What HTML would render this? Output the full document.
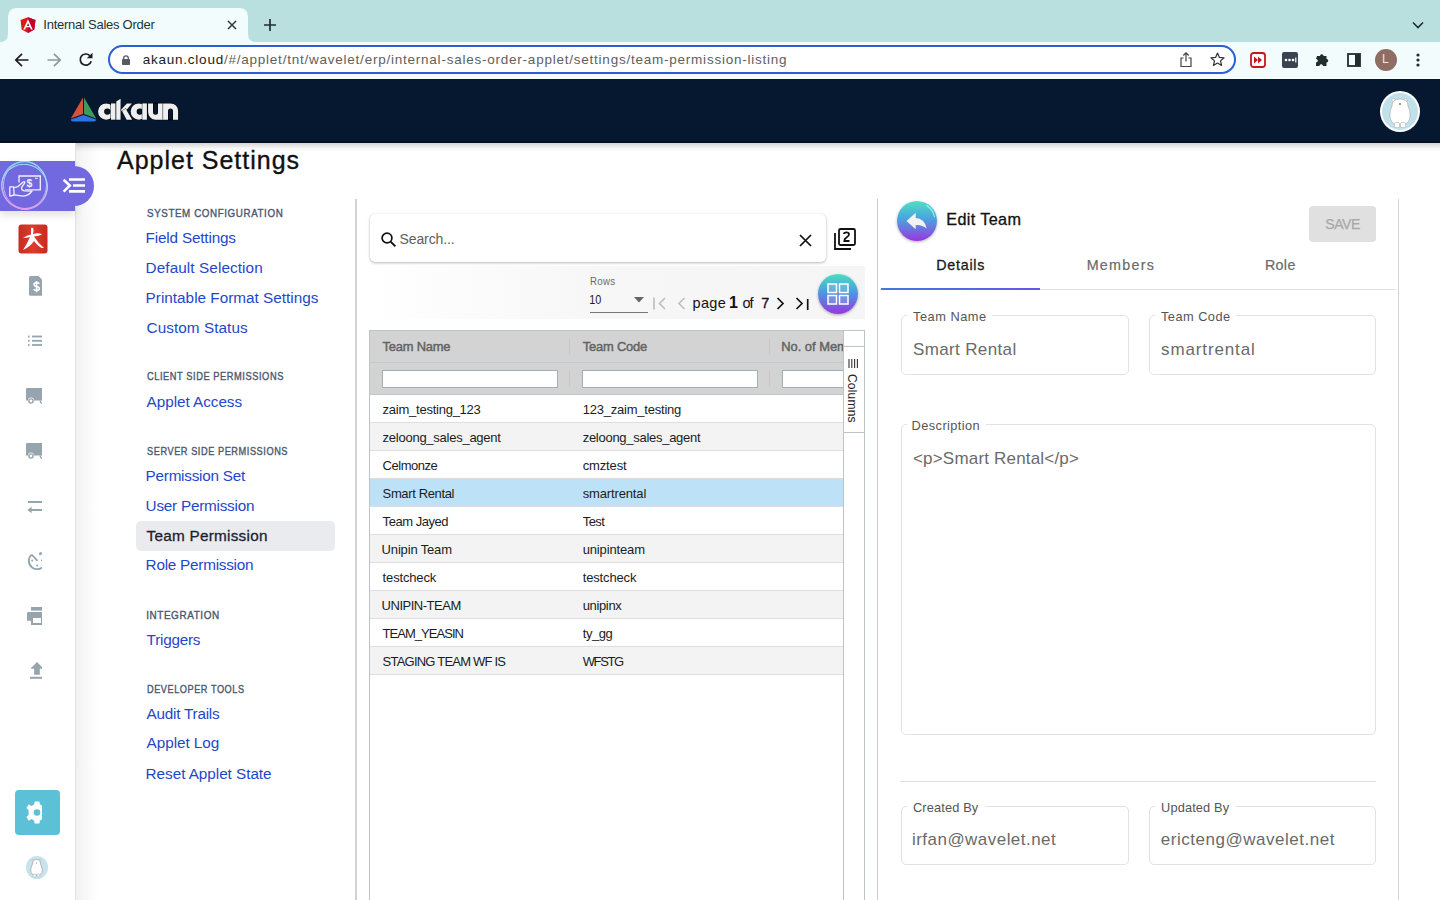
<!DOCTYPE html>
<html><head><meta charset="utf-8">
<title>Internal Sales Order</title>
<style>
*{box-sizing:border-box;margin:0;padding:0}
html,body{width:1440px;height:900px;overflow:hidden;background:#fff;font-family:"Liberation Sans",sans-serif}
body{position:relative}
.a{position:absolute}
.t{position:absolute;white-space:nowrap;line-height:1}
svg{position:absolute;overflow:visible}
.vl{position:absolute;width:1px;background:#cfcfcf}
.row{position:absolute;left:370px;width:473px;height:28px;border-bottom:1px solid #dedede}
.fld{position:absolute;border:1px solid #e2e2e2;border-radius:5px}
.gap{position:absolute;height:4px;background:#fff}
.sep{position:absolute;width:1px;height:16px;background:#c6c9cc}
.finp{position:absolute;height:18px;background:#fff;border:1px solid #9fb1b4;top:370px}
</style></head><body>
<!-- ============ CHROME ============ -->
<div class="a" style="left:0;top:0;width:1440px;height:42px;background:#badfdf"></div>
<svg style="left:0;top:0" width="260" height="42"><path d="M0,42 Q8,42 8,34 L8,17 Q8,8 17,8 L239,8 Q248,8 248,17 L248,34 Q248,42 256,42 Z" fill="#f2fcfc"/></svg>
<!-- angular icon -->
<svg style="left:20px;top:17px" width="16" height="16" viewBox="0 0 16 16"><path d="M8,0.3 L15.5,3 L14.3,12.6 L8,16 L1.7,12.6 L0.5,3 Z" fill="#dd1b16"/><path d="M8,0.3 L15.5,3 L14.3,12.6 L8,16 Z" fill="#c3002f"/><path d="M8,2.2 L3.3,12.5 H5.1 L6,10.3 H10 L10.9,12.5 H12.7 Z M8,6.1 L9.3,9 H6.7 Z" fill="#fff" fill-rule="evenodd"/></svg>
<svg style="left:227px;top:20px" width="10" height="10"><path d="M1,1 L9,9 M9,1 L1,9" stroke="#2a3a3a" stroke-width="1.5"/></svg>
<svg style="left:264px;top:19px" width="12" height="12"><path d="M6,0 V12 M0,6 H12" stroke="#1f2f2f" stroke-width="1.7"/></svg>
<svg style="left:1412px;top:21px" width="12" height="8"><path d="M1,1.5 L6,6.5 L11,1.5" stroke="#1f2f2f" stroke-width="1.6" fill="none"/></svg>
<div class="a" style="left:0;top:42px;width:1440px;height:37px;background:#f2fcfc"></div>
<!-- nav buttons -->
<svg style="left:14px;top:52px" width="16" height="16"><path d="M14.5,8 H2 M8,1.8 L1.8,8 L8,14.2" stroke="#1c1c1c" stroke-width="1.7" fill="none"/></svg>
<svg style="left:46px;top:52px" width="16" height="16"><path d="M1.5,8 H14 M8,1.8 L14.2,8 L8,14.2" stroke="#8a9898" stroke-width="1.7" fill="none"/></svg>
<svg style="left:78px;top:52px" width="16" height="16"><path d="M13.2,9.3 A5.6,5.6 0 1 1 11.8,3.6" stroke="#1c1c1c" stroke-width="1.7" fill="none"/><path d="M8.8,6.3 L14.5,6.3 L14.5,0.8 Z" fill="#1c1c1c"/></svg>
<div class="a" style="left:108px;top:45px;width:1128px;height:29px;border:2px solid #2a5fd5;border-radius:15px;background:#fff"></div>
<svg style="left:122px;top:55px" width="8" height="10"><path d="M1.7,4.3 V3.2 A2.3,2.3 0 0 1 6.3,3.2 V4.3" stroke="#575b61" stroke-width="1.3" fill="none"/><rect x="0" y="4" width="8" height="6" rx="0.8" fill="#575b61"/></svg>
<!-- share -->
<svg style="left:1180px;top:52px" width="12" height="16"><path d="M3.5,6 H1 V14.5 H11 V6 H8.5" stroke="#444" stroke-width="1.2" fill="none"/><path d="M6,1 V9.5 M3.3,3.5 L6,0.9 L8.7,3.5" stroke="#444" stroke-width="1.2" fill="none"/></svg>
<!-- star -->
<svg style="left:1210px;top:52px" width="15" height="15" viewBox="0 0 15 15"><path d="M7.5,1 L9.4,5.4 L14.1,5.8 L10.5,8.9 L11.6,13.5 L7.5,11.1 L3.4,13.5 L4.5,8.9 L0.9,5.8 L5.6,5.4 Z" stroke="#333" stroke-width="1.2" fill="none" stroke-linejoin="round"/></svg>
<!-- ext red -->
<svg style="left:1250px;top:52px" width="16" height="16"><rect x="1" y="1" width="14" height="14" rx="2.5" fill="#fff" stroke="#c8161d" stroke-width="1.8"/><path d="M4,4.5 L8,8 L4,11.5 Z M8,4.5 L12,8 L8,11.5 Z" fill="#c8161d"/></svg>
<!-- ext dark -->
<svg style="left:1282px;top:52px" width="16" height="16"><rect x="0" y="0" width="16" height="16" rx="2" fill="#3a4450"/><circle cx="4" cy="8" r="1.3" fill="#fff"/><circle cx="7.5" cy="8" r="1.3" fill="#fff"/><circle cx="11" cy="8" r="1.3" fill="#fff"/><rect x="13.2" y="5.5" width="1.2" height="5" fill="#fff"/></svg>
<!-- puzzle -->
<svg style="left:1315px;top:53px" width="15" height="14" viewBox="0 0 15 14"><path d="M2,3 H5 A1.8,1.8 0 0 1 8.6,3 H11.5 V6 A1.8,1.8 0 0 1 11.5,9.6 V13 H8 A1.8,1.8 0 0 0 4.4,13 H1 V9.5 A1.8,1.8 0 0 0 1,5.9 Z" fill="#1f2d2d"/></svg>
<!-- sidebar -->
<svg style="left:1347px;top:53px" width="14" height="14"><rect x="1" y="1" width="12" height="12" fill="none" stroke="#1f2d2d" stroke-width="1.8"/><rect x="8" y="1" width="5" height="12" fill="#1f2d2d"/></svg>
<!-- avatar L -->
<div class="a" style="left:1375px;top:49px;width:22px;height:22px;border-radius:50%;background:#8e6d62"></div>
<div class="t" style="left:1382px;top:53px;font-size:12px;color:#f0e6e0">L</div>
<svg style="left:1416px;top:53px" width="4" height="14"><circle cx="2" cy="2" r="1.6" fill="#1f2d2d"/><circle cx="2" cy="7" r="1.6" fill="#1f2d2d"/><circle cx="2" cy="12" r="1.6" fill="#1f2d2d"/></svg>

<!-- ============ APP HEADER ============ -->
<div class="a" style="left:0;top:79px;width:1440px;height:64px;background:#061830;border-bottom:2px solid #030f22"></div>
<svg style="left:70px;top:97px" width="27" height="25" viewBox="0 0 27 25"><path d="M13,0.5 L13,17 L0.8,21.5 Z" fill="#d8513a"/><path d="M14,0.5 L26.2,21.5 L14,17 Z" fill="#3c9a5c"/><path d="M13.5,18 L26.2,22.5 Q26,24.5 24,24.5 L3,24.5 Q1,24.5 0.8,22.5 Z" fill="#2e73e0"/></svg>
<svg style="left:0;top:0" width="200" height="140" viewBox="0 0 200 140"><g fill="#efefef" stroke="#000" stroke-width="0.9" paint-order="stroke">
<path fill-rule="evenodd" d="M106.2,103.4 A8.15,8.15 0 1 0 106.2,119.7 A8.15,8.15 0 1 0 106.2,103.4 Z M107.3,108.4 A3.15,3.15 0 1 1 107.3,114.7 A3.15,3.15 0 1 1 107.3,108.4 Z"/>
<rect x="111" y="103.4" width="4.6" height="16.3"/>
<path d="M116.25,101.6 L120.6,98.8 V119.7 H116.25 Z"/>
<path d="M120.6,110.2 L126.8,103.4 H132 L124.3,112.4 Z"/>
<path d="M122.2,111.2 L125.6,108.6 L132.2,119.7 H126.6 Z"/>
<path fill-rule="evenodd" d="M138.8,103.4 A8.15,8.15 0 1 0 138.8,119.7 A8.15,8.15 0 1 0 138.8,103.4 Z M139.8,108.4 A3.15,3.15 0 1 1 139.8,114.7 A3.15,3.15 0 1 1 139.8,108.4 Z"/>
<rect x="142.3" y="103.4" width="4.6" height="16.3"/>
<path fill-rule="evenodd" d="M148.1,103.4 H163.1 V119.7 H155.6 A7.5,7.5 0 0 1 148.1,112.2 Z M153,103.4 V112.2 A2.5,2.5 0 0 0 158,112.2 V103.4 Z"/>
<path fill-rule="evenodd" d="M163.1,119.7 V103.4 H170.6 A7.5,7.5 0 0 1 178.1,110.9 V119.7 Z M168,119.7 V110.9 A2.5,2.5 0 0 1 173,110.9 V119.7 Z"/>
</g></svg>
<div class="a" style="left:1380px;top:91px;width:40px;height:41px;border-radius:50%;background:#fff"></div>
<div class="a" style="left:1382px;top:93px;width:36px;height:37px;border-radius:50%;background:#c2e0ea"></div>
<svg style="left:1388px;top:96px" width="24" height="34" viewBox="0 0 24 34"><circle cx="5.5" cy="4" r="1.6" fill="#fff" stroke="#999" stroke-width="0.4"/><circle cx="17.5" cy="4" r="1.6" fill="#fff" stroke="#999" stroke-width="0.4"/><path d="M4,10 Q4,3 12,3 Q20,3 20,10 Q22.5,15 22,20 Q21.5,27.5 16,28 H8 Q2.5,27.5 2,20 Q1.5,15 4,10 Z" fill="#fff" stroke="#888" stroke-width="0.4"/><rect x="6.5" y="26.5" width="5" height="5" rx="1" fill="#fff" stroke="#999" stroke-width="0.4"/><rect x="12.5" y="26.5" width="5" height="5" rx="1" fill="#fff" stroke="#999" stroke-width="0.4"/><circle cx="12" cy="8" r="0.8" fill="#222"/></svg>

<!-- ============ LEFT RAIL ============ -->
<div class="a" style="left:0;top:143px;width:76px;height:757px;background:#fff;border-right:1px solid #e2e2e2"></div>
<div class="a" style="left:76px;top:143px;width:22px;height:757px;background:linear-gradient(90deg,#f0f0f0,#f7f7f7 35%,#fff)"></div>
<div class="a" style="left:76px;top:143px;width:1364px;height:9px;background:linear-gradient(180deg,rgba(0,0,0,0.17),rgba(0,0,0,0.04) 60%,rgba(0,0,0,0))"></div>
<!-- purple pill -->
<div class="a" style="left:0;top:161px;width:75px;height:50px;background:#7268e0;box-shadow:0 4px 8px rgba(0,0,0,0.12)"></div>
<div class="a" style="left:53px;top:166px;width:41px;height:40px;border-radius:20px;background:#7268e0"></div>
<svg style="left:0;top:158px" width="100" height="57" viewBox="0 0 100 57"><defs><linearGradient id="ring" x1="0" y1="0" x2="0" y2="1"><stop offset="0" stop-color="#8fe4f8"/><stop offset="0.5" stop-color="#b9c8f5"/><stop offset="1" stop-color="#e79cf2"/></linearGradient></defs>
<ellipse cx="24.5" cy="27.5" rx="22.5" ry="24" transform="rotate(-12 24.5 27.5)" stroke="url(#ring)" stroke-width="1" fill="none"/>
<ellipse cx="24.5" cy="28.5" rx="23" ry="22" transform="rotate(18 24.5 28.5)" stroke="url(#ring)" stroke-width="1" fill="none"/>
<ellipse cx="25" cy="27" rx="21.5" ry="23.5" stroke="url(#ring)" stroke-width="0.9" fill="none"/>
<path d="M19,24.5 V18 H40.3 V31.8 H25" stroke="#f4f0ff" stroke-width="1.3" fill="none"/>
<path d="M35,20.3 H37.8" stroke="#f4f0ff" stroke-width="1"/>
<text x="26.6" y="29" font-size="10.5" font-weight="bold" font-family="Liberation Sans" fill="#f4f0ff">$</text>
<path d="M9.8,28.8 L13.6,28.8 L14.2,37 L9.8,38.2 Z" stroke="#f4f0ff" stroke-width="1.3" fill="none" stroke-linejoin="round"/>
<path d="M14.2,29.6 L18,28.6 L23.2,24 Q25.2,23 24.6,25.2 L21.8,29.2 Q20.8,32.3 24.5,32.8 L32,33.2 Q29,37.6 23,38.2 L14.4,36.8" stroke="#f4f0ff" stroke-width="1.3" fill="none" stroke-linejoin="round"/>
<path d="M63.6,21.8 L69.8,27.6 L63.6,33.6" stroke="#fff" stroke-width="2.6" fill="none"/>
<path d="M69,21.5 H85 M73,27.5 H85 M69,33.3 H85" stroke="#fff" stroke-width="2.7"/>
</svg>
<!-- red app icon -->
<svg style="left:18px;top:224px" width="30" height="30" viewBox="0 0 30 30"><defs><linearGradient id="rg" x1="0" y1="0" x2="1" y2="0"><stop offset="0" stop-color="#c62d22"/><stop offset="0.5" stop-color="#e03a2c"/><stop offset="1" stop-color="#c62a20"/></linearGradient></defs><rect x="0.5" y="0.5" width="29" height="29" rx="3" fill="url(#rg)"/><path d="M13,4 Q16,3 15.5,7 L15,10 Q21,8.5 24,10.5 Q21,12 16,12.5 Q20,19 26,24 Q22,25 16,17 Q12,23 5,26 Q9,20 12,13 Q8,14 5,14 Q9,11 13,10.5 Z" fill="#fff"/></svg>
<!-- gray icons -->
<div class="a" style="left:0;top:0;width:42px;height:900px;overflow:hidden">
<svg style="left:29px;top:276px" width="16" height="20" viewBox="0 0 16 20"><path d="M1.5,0 H9.5 L13,3.5 V19.8 H1.5 Q0,19.8 0,18.3 V1.5 Q0,0 1.5,0 Z" fill="#96a4ae"/><path d="M10.2,7.8 Q10,6.6 7.6,6.6 Q5.1,6.6 5.1,8.6 Q5.1,10.3 7.6,10.5 Q10.3,10.8 10.3,12.6 Q10.3,14.5 7.6,14.5 Q5.2,14.5 5,13.2 M7.6,5 V16.2" stroke="#fff" stroke-width="1.6" fill="none"/></svg>
<svg style="left:28px;top:335px" width="16" height="12" viewBox="0 0 16 12"><rect x="0" y="0.6" width="1.6" height="1.8" fill="#96a4ae"/><rect x="0" y="4.9" width="1.6" height="1.8" fill="#96a4ae"/><rect x="0" y="9.1" width="1.6" height="1.8" fill="#96a4ae"/><rect x="4" y="0.6" width="12" height="1.8" fill="#96a4ae"/><rect x="4" y="4.9" width="12" height="1.8" fill="#96a4ae"/><rect x="4" y="9.1" width="12" height="1.8" fill="#96a4ae"/></svg>
<svg style="left:26px;top:388px" width="20" height="16" viewBox="0 0 20 16"><path d="M1,0 H20 V12.5 H8 A3,3 0 0 0 2,12.5 H0 V1 Q0,0 1,0 Z" fill="#96a4ae"/><circle cx="5" cy="13" r="2.1" fill="none" stroke="#96a4ae" stroke-width="1.4"/><path d="M14.5,12.5 A2.2,2.2 0 0 0 16,15.3" stroke="#96a4ae" stroke-width="1.4" fill="none"/></svg>
<svg style="left:26px;top:443px" width="20" height="16" viewBox="0 0 20 16"><path d="M1,0 H20 V12.5 H8 A3,3 0 0 0 2,12.5 H0 V1 Q0,0 1,0 Z" fill="#96a4ae"/><circle cx="5" cy="13" r="2.1" fill="none" stroke="#96a4ae" stroke-width="1.4"/><path d="M14.5,12.5 A2.2,2.2 0 0 0 16,15.3" stroke="#96a4ae" stroke-width="1.4" fill="none"/></svg>
<svg style="left:27px;top:500px" width="18" height="15" viewBox="0 0 18 15"><path d="M1,2 H18 M3,10 H18" stroke="#96a4ae" stroke-width="1.9"/><path d="M4.6,6.8 L0.4,10 L4.6,13.3 Z" fill="#96a4ae"/></svg>
<svg style="left:27px;top:551px" width="20" height="20" viewBox="0 0 20 20"><path d="M4.5,3.6 A8.4,8.4 0 1 0 13,1.8" stroke="#96a4ae" stroke-width="1.9" fill="none"/><path d="M13,1.6 V4.2" stroke="#96a4ae" stroke-width="1.6"/><path d="M4.6,3.5 L10.5,9.8" stroke="#96a4ae" stroke-width="1.8"/><rect x="4.3" y="8.6" width="1.8" height="1.8" fill="#96a4ae"/><rect x="9.3" y="13.6" width="1.8" height="1.8" fill="#96a4ae"/><rect x="14" y="8.6" width="1.8" height="1.8" fill="#96a4ae"/></svg>
<svg style="left:27px;top:607px" width="20" height="19" viewBox="0 0 20 19"><rect x="4" y="0" width="16" height="3.6" fill="#96a4ae"/><path d="M1.2,5 H16 V18 H4 V13.8 H0 V6.2 Q0,5 1.2,5 Z" fill="#96a4ae"/><rect x="6" y="11" width="8" height="5" fill="#fff"/></svg>
<svg style="left:30px;top:662px" width="16" height="17" viewBox="0 0 16 17"><path d="M7,0 L13.6,6.7 H9.8 V12.8 H4.2 V6.7 H0.4 Z" fill="#96a4ae"/><rect x="0" y="14.8" width="16" height="2" fill="#96a4ae"/></svg>
</div>
<!-- gear box -->
<div class="a" style="left:15px;top:790px;width:45px;height:45px;border-radius:4px;background:#5cc0d7"></div>
<div class="a" style="left:15px;top:790px;width:27px;height:45px;overflow:hidden">
<svg style="left:11px;top:11px" width="22" height="23" viewBox="0 0 22 23"><g transform="translate(11 11.5)"><path d="M-2.4,-11 H2.4 L2.9,-8 L5.6,-6.6 L8.2,-8.2 L10.6,-4.4 L8.4,-2.4 V2.4 L10.6,4.4 L8.2,8.2 L5.6,6.6 L2.9,8 L2.4,11 H-2.4 L-2.9,8 L-5.6,6.6 L-8.2,8.2 L-10.6,4.4 L-8.4,2.4 V-2.4 L-10.6,-4.4 L-8.2,-8.2 L-5.6,-6.6 L-2.9,-8 Z" fill="#fff"/><circle r="3.3" fill="#5cc0d7"/></g></svg>
</div>
<div class="a" style="left:26px;top:856px;width:22px;height:23px;border-radius:50%;background:#c7e3ec"></div>
<svg style="left:30px;top:858px" width="13" height="20" viewBox="0 0 13 20"><circle cx="3" cy="2.2" r="1" fill="#fff" stroke="#888" stroke-width="0.35"/><circle cx="10" cy="2.2" r="1" fill="#fff" stroke="#888" stroke-width="0.35"/><path d="M2.5,6 Q2.5,1.5 6.5,1.5 Q10.5,1.5 10.5,6 Q12.3,9 12.2,12.5 Q12,16.8 8.5,17 H4.5 Q1,16.8 0.8,12.5 Q0.7,9 2.5,6 Z" fill="#fff" stroke="#777" stroke-width="0.45"/><rect x="3.2" y="16" width="2.8" height="3" rx="0.6" fill="#fff" stroke="#888" stroke-width="0.35"/><rect x="7" y="16" width="2.8" height="3" rx="0.6" fill="#fff" stroke="#888" stroke-width="0.35"/><circle cx="6.5" cy="5" r="0.45" fill="#333"/></svg>

<!-- ============ MAIN ============ -->
<div class="a" style="left:136px;top:521px;width:199px;height:30px;border-radius:5px;background:#eaebef"></div>
<div class="a" style="left:355px;top:199px;width:2px;height:701px;background:#d2d2d2"></div>
<div class="a" style="left:877px;top:199px;width:1px;height:701px;background:#cbcbcb"></div>
<div class="a" style="left:1398px;top:199px;width:1px;height:701px;background:#d5d5d5"></div>
<!-- search -->
<div class="a" style="left:370px;top:214px;width:456px;height:48px;border-radius:5px;background:#fff;box-shadow:0 1px 3px rgba(0,0,0,0.28),0 0 1px rgba(0,0,0,0.1)"></div>
<svg style="left:381px;top:232px" width="16" height="16" viewBox="0 0 16 16"><circle cx="6" cy="6" r="4.9" stroke="#111" stroke-width="1.7" fill="none"/><path d="M9.6,9.6 L14.4,14.4" stroke="#111" stroke-width="1.9"/></svg>
<svg style="left:799px;top:234px" width="13" height="13" viewBox="0 0 13 13"><path d="M1,1 L12,12 M12,1 L1,12" stroke="#111" stroke-width="1.7"/></svg>
<svg style="left:833px;top:227px" width="24" height="24" viewBox="0 0 24 24"><path d="M2,6 V22 H18" stroke="#111" stroke-width="1.8" fill="none"/><rect x="6" y="2" width="16" height="16" rx="1.5" stroke="#111" stroke-width="1.8" fill="none"/><path d="M11,7 Q11,5.3 13.5,5.3 Q16,5.3 16,7.3 Q16,9 13.5,10.5 Q11.3,11.8 11.3,14 H16.5" stroke="#111" stroke-width="1.8" fill="none"/></svg>
<!-- paginator bg -->
<div class="a" style="left:370px;top:266px;width:495px;height:53px;background:linear-gradient(90deg,#fff 0%,#f7f7f7 45%,#f5f5f5 100%)"></div>
<div class="a" style="left:590px;top:312px;width:58px;height:1px;background:#777"></div>
<svg style="left:634px;top:297px" width="10" height="6"><path d="M0,0 H10 L5,5.5 Z" fill="#666"/></svg>
<svg style="left:653px;top:297px" width="14" height="13" viewBox="0 0 14 13"><path d="M1,0.5 V12.5" stroke="#bdbdbd" stroke-width="1.6"/><path d="M12,1 L6.5,6.5 L12,12" stroke="#bdbdbd" stroke-width="1.6" fill="none"/></svg>
<svg style="left:677px;top:297px" width="9" height="13" viewBox="0 0 9 13"><path d="M7.5,1 L2,6.5 L7.5,12" stroke="#bdbdbd" stroke-width="1.6" fill="none"/></svg>
<svg style="left:776px;top:297px" width="9" height="13" viewBox="0 0 9 13"><path d="M1.5,1 L7,6.5 L1.5,12" stroke="#111" stroke-width="1.7" fill="none"/></svg>
<svg style="left:795px;top:297px" width="15" height="13" viewBox="0 0 15 13"><path d="M1.5,1 L7,6.5 L1.5,12" stroke="#111" stroke-width="1.7" fill="none"/><path d="M12.7,2 V13" stroke="#111" stroke-width="1.7"/></svg>
<!-- grid fab -->
<div class="a" style="left:818px;top:274px;width:40px;height:40px;border-radius:50%;background:linear-gradient(180deg,#49e0c0 0%,#4a9be0 45%,#7a5ce0 80%,#9a35e0 100%);box-shadow:0 1px 3px rgba(0,0,0,0.3)"></div>
<svg style="left:827px;top:283px" width="22" height="22" viewBox="0 0 22 22"><rect x="1" y="1" width="8.5" height="8.5" stroke="#fff" stroke-width="1.5" fill="rgba(255,255,255,0.15)"/><rect x="12.5" y="1" width="8.5" height="8.5" stroke="#fff" stroke-width="1.5" fill="rgba(255,255,255,0.15)"/><rect x="1" y="12.5" width="8.5" height="8.5" stroke="#fff" stroke-width="1.5" fill="rgba(255,255,255,0.15)"/><rect x="12.5" y="12.5" width="8.5" height="8.5" stroke="#fff" stroke-width="1.5" fill="rgba(255,255,255,0.15)"/></svg>
<!-- table -->
<div class="a" style="left:369px;top:330px;width:496px;height:570px;border:1px solid #bdc3c7;border-bottom:none;background:#fff"></div>
<div class="a" style="left:370px;top:331px;width:473px;height:64px;background:#d3d3d3;border-bottom:1px solid #bdc3c7"></div>
<div class="a" style="left:370px;top:362px;width:473px;height:1px;background:#c3c9cc"></div>
<div class="sep" style="left:569px;top:339px"></div><div class="sep" style="left:769px;top:339px"></div>
<div class="sep" style="left:569px;top:371px"></div><div class="sep" style="left:769px;top:371px"></div>
<div class="finp" style="left:382px;width:176px"></div>
<div class="finp" style="left:582px;width:176px"></div>
<div class="finp" style="left:782px;width:70px"></div>
<div class="row" style="top:395px;background:#fff"></div>
<div class="row" style="top:423px;background:#f3f3f3"></div>
<div class="row" style="top:451px;background:#fff"></div>
<div class="row" style="top:479px;background:#bde2f8"></div>
<div class="row" style="top:507px;background:#fff"></div>
<div class="row" style="top:535px;background:#f3f3f3"></div>
<div class="row" style="top:563px;background:#fff"></div>
<div class="row" style="top:591px;background:#f3f3f3"></div>
<div class="row" style="top:619px;background:#fff"></div>
<div class="row" style="top:647px;background:#f3f3f3"></div>
<!-- side columns panel -->
<div class="a" style="left:843px;top:331px;width:21px;height:569px;background:#fff;border-left:1px solid #bdc3c7;z-index:5"></div>
<div class="a" style="left:843px;top:346px;width:21px;height:1px;background:#bdc3c7;z-index:6"></div>
<div class="a" style="left:843px;top:432px;width:21px;height:1px;background:#bdc3c7;z-index:6"></div>
<svg style="left:848px;top:359px;z-index:6" width="11" height="9" viewBox="0 0 11 9"><path d="M1,0 V9 M3.8,0 V9 M6.6,0 V9 M9.4,0 V9" stroke="#333" stroke-width="1.1"/></svg>
<div class="t" style="left:846px;top:374px;font-size:12px;color:#222;writing-mode:vertical-rl;letter-spacing:0.2px;z-index:6">Columns</div>
<div class="a" style="left:865px;top:331px;width:11px;height:40px;background:#fff;z-index:5"></div>
<!-- right panel -->
<div class="a" style="left:897px;top:201px;width:40px;height:40px;border-radius:50%;background:linear-gradient(180deg,#4fe0c2 0%,#4aa2e0 45%,#7a62e0 78%,#9a35e0 100%);box-shadow:0 1px 3px rgba(0,0,0,0.3)"></div>
<svg style="left:906px;top:210px" width="22" height="22" viewBox="0 0 22 22"><path d="M0.5,11 L9.7,2.7 V8 Q18.5,8.5 20.7,18.5 Q16,14.5 9.7,15 V19.2 Z" fill="#f2f2f2"/><path d="M20.3,-4.7 A18.5,18.5 0 0 1 28.6,7.2" stroke="rgba(170,250,250,0.85)" stroke-width="1.1" fill="none"/></svg>
<div class="a" style="left:1309px;top:206px;width:67px;height:36px;border-radius:4px;background:#e0e0e0"></div>
<div class="a" style="left:880px;top:289px;width:516px;height:1px;background:#e2e2e2"></div>
<div class="a" style="left:881px;top:288px;width:159px;height:2px;background:linear-gradient(90deg,#3b7be0,#6a55e6)"></div>
<div class="fld" style="left:901px;top:315px;width:228px;height:60px"></div>
<div class="gap" style="left:907px;top:313px;width:85px"></div>
<div class="fld" style="left:1149px;top:315px;width:227px;height:60px"></div>
<div class="gap" style="left:1155px;top:313px;width:81px"></div>
<div class="fld" style="left:901px;top:424px;width:475px;height:311px"></div>
<div class="gap" style="left:907px;top:422px;width:79px"></div>
<div class="a" style="left:900px;top:781px;width:476px;height:1px;background:#e2e2e2"></div>
<div class="fld" style="left:901px;top:806px;width:228px;height:59px"></div>
<div class="gap" style="left:907px;top:804px;width:78px"></div>
<div class="fld" style="left:1149px;top:806px;width:227px;height:59px"></div>
<div class="gap" style="left:1155px;top:804px;width:81px"></div>
<div class="t" style="left:43.30px;top:18.20px;font-size:13px;letter-spacing:-0.253px;color:#1d3434;">Internal Sales Order</div>
<div class="t" style="left:142.70px;top:53.17px;font-size:13.5px;letter-spacing:0.767px;color:#5f6060;"><span style="color:#1b1b1b">akaun.cloud</span>/#/applet/tnt/wavelet/erp/internal-sales-order-applet/settings/team-permission-listing</div>
<div class="t" style="left:117.00px;top:148.14px;font-size:25px;letter-spacing:0.995px;color:#111;-webkit-text-stroke:0.35px #111;">Applet Settings</div>
<div class="t" style="left:146.60px;top:206.88px;font-size:11.6px;letter-spacing:0.7px;transform:scaleX(0.8451);transform-origin:0.00px 0;color:#4a5870;-webkit-text-stroke:0.4px #4a5870;">SYSTEM CONFIGURATION</div>
<div class="t" style="left:146.60px;top:370.48px;font-size:11.6px;letter-spacing:0.7px;transform:scaleX(0.7998);transform-origin:0.00px 0;color:#4a5870;-webkit-text-stroke:0.4px #4a5870;">CLIENT SIDE PERMISSIONS</div>
<div class="t" style="left:146.60px;top:444.68px;font-size:11.6px;letter-spacing:0.7px;transform:scaleX(0.7942);transform-origin:0.00px 0;color:#4a5870;-webkit-text-stroke:0.4px #4a5870;">SERVER SIDE PERMISSIONS</div>
<div class="t" style="left:145.60px;top:608.98px;font-size:11.6px;letter-spacing:0.7px;transform:scaleX(0.8548);transform-origin:1.00px 0;color:#4a5870;-webkit-text-stroke:0.4px #4a5870;">INTEGRATION</div>
<div class="t" style="left:146.60px;top:683.08px;font-size:11.6px;letter-spacing:0.7px;transform:scaleX(0.7902);transform-origin:0.00px 0;color:#4a5870;-webkit-text-stroke:0.4px #4a5870;">DEVELOPER TOOLS</div>
<div class="t" style="left:145.60px;top:229.65px;font-size:15.3px;letter-spacing:-0.179px;color:#1f47c9;">Field Settings</div>
<div class="t" style="left:145.60px;top:260.05px;font-size:15.3px;letter-spacing:0.091px;color:#1f47c9;">Default Selection</div>
<div class="t" style="left:145.60px;top:290.05px;font-size:15.3px;letter-spacing:0.011px;color:#1f47c9;">Printable Format Settings</div>
<div class="t" style="left:146.60px;top:319.55px;font-size:15.3px;letter-spacing:0.061px;color:#1f47c9;">Custom Status</div>
<div class="t" style="left:146.60px;top:393.75px;font-size:15.3px;letter-spacing:-0.048px;color:#1f47c9;">Applet Access</div>
<div class="t" style="left:145.60px;top:468.05px;font-size:15.3px;letter-spacing:-0.255px;color:#1f47c9;">Permission Set</div>
<div class="t" style="left:145.60px;top:497.95px;font-size:15.3px;letter-spacing:-0.242px;color:#1f47c9;">User Permission</div>
<div class="t" style="left:145.60px;top:557.45px;font-size:15.3px;letter-spacing:-0.247px;color:#1f47c9;">Role Permission</div>
<div class="t" style="left:146.60px;top:631.85px;font-size:15.3px;letter-spacing:-0.241px;color:#1f47c9;">Triggers</div>
<div class="t" style="left:146.60px;top:705.55px;font-size:15.3px;letter-spacing:-0.236px;color:#1f47c9;">Audit Trails</div>
<div class="t" style="left:146.60px;top:735.35px;font-size:15.3px;letter-spacing:-0.049px;color:#1f47c9;">Applet Log</div>
<div class="t" style="left:145.60px;top:765.75px;font-size:15.3px;letter-spacing:-0.044px;color:#1f47c9;">Reset Applet State</div>
<div class="t" style="left:146.60px;top:527.65px;font-size:15.3px;letter-spacing:0.250px;color:#1b1f2e;-webkit-text-stroke:0.3px #1b1f2e;">Team Permission</div>
<div class="t" style="left:399.50px;top:231.95px;font-size:14px;letter-spacing:-0.105px;color:#606060;">Search...</div>
<div class="t" style="left:590.20px;top:276.11px;font-size:10.5px;letter-spacing:0.3px;transform:scaleX(0.9218);transform-origin:0.00px 0;color:#6b6b6b;">Rows</div>
<div class="t" style="left:589.00px;top:293.07px;font-size:13.5px;letter-spacing:0px;transform:scaleX(0.7995);transform-origin:1.00px 0;color:#222;">10</div>
<div class="t" style="left:692.50px;top:296.03px;font-size:14.5px;letter-spacing:0.369px;color:#111;">page</div>
<div class="t" style="left:729.00px;top:294.76px;font-size:16px;font-weight:bold;color:#111;">1</div>
<div class="t" style="left:742.50px;top:296.03px;font-size:14.5px;letter-spacing:-0.964px;color:#111;">of</div>
<div class="t" style="left:761.25px;top:296.03px;font-size:14.5px;color:#111;-webkit-text-stroke:0.3px #111;">7</div>
<div class="t" style="left:382.60px;top:340.68px;font-size:12.9px;letter-spacing:-0.202px;color:#636363;-webkit-text-stroke:0.45px #636363;">Team Name</div>
<div class="t" style="left:582.70px;top:340.68px;font-size:12.9px;letter-spacing:-0.169px;color:#636363;-webkit-text-stroke:0.45px #636363;">Team Code</div>
<div class="t clip3" style="left:781.20px;top:340.68px;font-size:12.9px;color:#636363;-webkit-text-stroke:0.45px #636363;">No. of Mem</div>
<div class="t" style="left:382.60px;top:402.90px;font-size:13px;letter-spacing:-0.245px;color:#181d1f;">zaim_testing_123</div>
<div class="t" style="left:582.70px;top:402.90px;font-size:13px;letter-spacing:-0.218px;color:#181d1f;">123_zaim_testing</div>
<div class="t" style="left:382.60px;top:430.90px;font-size:13px;letter-spacing:-0.254px;color:#181d1f;">zeloong_sales_agent</div>
<div class="t" style="left:582.70px;top:430.90px;font-size:13px;letter-spacing:-0.276px;color:#181d1f;">zeloong_sales_agent</div>
<div class="t" style="left:382.60px;top:458.90px;font-size:13px;letter-spacing:-0.471px;color:#181d1f;">Celmonze</div>
<div class="t" style="left:582.70px;top:458.90px;font-size:13px;letter-spacing:-0.145px;color:#181d1f;">cmztest</div>
<div class="t" style="left:382.60px;top:486.90px;font-size:13px;letter-spacing:-0.361px;color:#181d1f;">Smart Rental</div>
<div class="t" style="left:582.70px;top:486.90px;font-size:13px;letter-spacing:-0.143px;color:#181d1f;">smartrental</div>
<div class="t" style="left:382.60px;top:514.90px;font-size:13px;letter-spacing:-0.462px;color:#181d1f;">Team Jayed</div>
<div class="t" style="left:582.70px;top:514.90px;font-size:13px;letter-spacing:-0.543px;color:#181d1f;">Test</div>
<div class="t" style="left:381.60px;top:542.90px;font-size:13px;letter-spacing:-0.163px;color:#181d1f;">Unipin Team</div>
<div class="t" style="left:582.70px;top:542.90px;font-size:13px;letter-spacing:-0.141px;color:#181d1f;">unipinteam</div>
<div class="t" style="left:382.60px;top:570.90px;font-size:13px;letter-spacing:-0.152px;color:#181d1f;">testcheck</div>
<div class="t" style="left:582.70px;top:570.90px;font-size:13px;letter-spacing:-0.152px;color:#181d1f;">testcheck</div>
<div class="t" style="left:381.60px;top:598.90px;font-size:13px;letter-spacing:-0.487px;color:#181d1f;">UNIPIN-TEAM</div>
<div class="t" style="left:582.70px;top:598.90px;font-size:13px;letter-spacing:-0.349px;color:#181d1f;">unipinx</div>
<div class="t" style="left:382.60px;top:626.90px;font-size:13px;letter-spacing:-0.964px;color:#181d1f;">TEAM_YEASIN</div>
<div class="t" style="left:582.70px;top:626.90px;font-size:13px;letter-spacing:-0.418px;color:#181d1f;">ty_gg</div>
<div class="t" style="left:382.60px;top:654.90px;font-size:13px;letter-spacing:-0.783px;color:#181d1f;">STAGING TEAM WF IS</div>
<div class="t" style="left:582.70px;top:654.90px;font-size:13px;letter-spacing:-1.381px;color:#181d1f;">WFSTG</div>
<div class="t" style="left:946.30px;top:211.49px;font-size:16.2px;letter-spacing:0.376px;color:#111;-webkit-text-stroke:0.3px #111;">Edit Team</div>
<div class="t" style="left:936.20px;top:258.20px;font-size:14.3px;letter-spacing:0.758px;color:#1a1a1a;-webkit-text-stroke:0.3px #1a1a1a;">Details</div>
<div class="t" style="left:1086.70px;top:258.20px;font-size:14.3px;letter-spacing:1.261px;color:#6a6a6a;-webkit-text-stroke:0.2px #6a6a6a;">Members</div>
<div class="t" style="left:1264.90px;top:258.20px;font-size:14.3px;letter-spacing:0.349px;color:#6a6a6a;-webkit-text-stroke:0.2px #6a6a6a;">Role</div>
<div class="t" style="left:1325.20px;top:216.95px;font-size:14px;letter-spacing:-0.392px;color:#a8a8a8;-webkit-text-stroke:0.25px #a8a8a8;">SAVE</div>
<div class="t" style="left:913.00px;top:311.16px;font-size:12.8px;letter-spacing:0.517px;color:#555;">Team Name</div>
<div class="t" style="left:1161.00px;top:311.16px;font-size:12.8px;letter-spacing:0.460px;color:#555;">Team Code</div>
<div class="t" style="left:911.60px;top:420.16px;font-size:12.8px;letter-spacing:0.411px;color:#555;">Description</div>
<div class="t" style="left:913.00px;top:802.16px;font-size:12.8px;letter-spacing:0.131px;color:#555;">Created By</div>
<div class="t" style="left:1161.00px;top:802.16px;font-size:12.8px;letter-spacing:0.136px;color:#555;">Updated By</div>
<div class="t" style="left:913.00px;top:340.61px;font-size:17px;letter-spacing:0.361px;color:#6a6a6a;">Smart Rental</div>
<div class="t" style="left:1161.00px;top:340.61px;font-size:17px;letter-spacing:0.875px;color:#6a6a6a;">smartrental</div>
<div class="t" style="left:913.00px;top:449.61px;font-size:17px;letter-spacing:0.188px;color:#6a6a6a;">&lt;p&gt;Smart Rental&lt;/p&gt;</div>
<div class="t" style="left:912.00px;top:831.11px;font-size:17px;letter-spacing:0.462px;color:#6a6a6a;">irfan@wavelet.net</div>
<div class="t" style="left:1160.80px;top:831.11px;font-size:17px;letter-spacing:0.521px;color:#6a6a6a;">ericteng@wavelet.net</div>
</body></html>
